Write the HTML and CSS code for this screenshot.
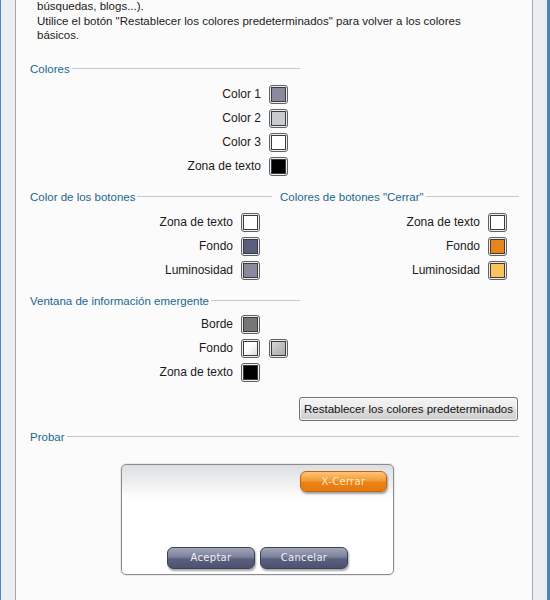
FILE: index.html
```html
<!DOCTYPE html>
<html>

<head>
    <meta charset="utf-8">
    <meta name="viewport" content="width=device-width">
    <title>Opciones de color</title>
    <link rel="stylesheet" href="styles.css">
</head>

<body>
    <div class="frame">
        <div class="content">
            <p class="intro">
                búsquedas, blogs...).<br>
                Utilice el botón "Restablecer los colores predeterminados" para volver a los colores
                básicos.
            </p>

            <div class="group narrow g-colores">
                <div class="legend"><span>Colores</span></div>
                <div class="rows">
                    <div class="row">Color 1 <span class="sw"><i class="c-gris"></i></span></div>
                    <div class="row">Color 2 <span class="sw"><i class="c-claro"></i></span></div>
                    <div class="row">Color 3 <span class="sw"><i class="c-blanco"></i></span></div>
                    <div class="row">Zona de texto <span class="sw"><i class="c-negro"></i></span></div>
                </div>
            </div>

            <div class="pair">
                <div class="group">
                    <div class="legend"><span>Color de los botones</span></div>
                    <div class="rows">
                        <div class="row">Zona de texto <span class="sw"><i class="c-blanco"></i></span></div>
                        <div class="row">Fondo <span class="sw"><i class="c-pizarra"></i></span></div>
                        <div class="row">Luminosidad <span class="sw"><i class="c-gris"></i></span></div>
                    </div>
                </div>
                <div class="group">
                    <div class="legend"><span>Colores de botones "Cerrar"</span></div>
                    <div class="rows">
                        <div class="row">Zona de texto <span class="sw"><i class="c-blanco"></i></span></div>
                        <div class="row">Fondo <span class="sw"><i class="c-naranja"></i></span></div>
                        <div class="row">Luminosidad <span class="sw"><i class="c-ambar"></i></span></div>
                    </div>
                </div>
            </div>

            <div class="group narrow g-ventana">
                <div class="legend"><span>Ventana de información emergente</span></div>
                <div class="rows">
                    <div class="row">Borde <span class="sw"><i class="c-borde"></i></span><span class="sw-empty"></span></div>
                    <div class="row">Fondo <span class="sw"><i class="c-fondo1"></i></span><span class="sw"><i class="c-fondo2"></i></span></div>
                    <div class="row">Zona de texto <span class="sw"><i class="c-negro"></i></span><span class="sw-empty"></span></div>
                </div>
            </div>

            <div class="actions">
                <button class="btn-reset">Restablecer los colores predeterminados</button>
            </div>

            <div class="group g-probar">
                <div class="legend"><span>Probar</span></div>
                <div class="preview">
                    <div class="preview-top">
                        <button class="pbtn pbtn-close">X-Cerrar</button>
                    </div>
                    <div class="preview-bottom">
                        <button class="pbtn">Aceptar</button>
                        <button class="pbtn">Cancelar</button>
                    </div>
                </div>
            </div>
        </div>
    </div>
</body>

</html>
```

FILE: styles.css
```css
* {
    margin: 0;
    padding: 0;
    box-sizing: border-box;
}

body {
    font-family: "Liberation Sans", Arial, sans-serif;
    font-size: 12px;
    color: #1a1a1a;
    background: #eceef1;
}

.frame {
    height: 600px;
    border-left: 1px solid #4a86c0;
    border-right: 3px solid #4a86c0;
    padding: 0 14px;
    background: #eceef1;
}

.content {
    height: 600px;
    overflow: hidden;
    background: #fbfbfc;
    border-left: 1px solid #a6a8ac;
    border-right: 1px solid #a6a8ac;
    padding: 0 13px 0 14px;
}

.intro {
    width: 425px;
    margin: -1px 0 0 7px;
    font-size: 11.5px;
    line-height: 14.5px;
}

/* group header: caption followed by a thin rule */
.legend {
    display: flex;
    align-items: center;
    height: 14px;
    font-size: 11.5px;
    color: #22678c;
}

.legend::after {
    content: "";
    flex: 1;
    height: 1px;
    margin-left: 2px;
    background: #c6c9cd;
}

.group {
    margin-top: 14px;
}

.narrow {
    width: 270px;
}

.g-colores {
    margin-top: 19px;
}

.rows {
    display: flex;
    flex-direction: column;
    gap: 5px;
    padding: 9px 12px 0 0;
}

.g-ventana .rows {
    padding-top: 7px;
}

.row {
    display: flex;
    justify-content: flex-end;
    align-items: center;
    height: 19px;
    gap: 8px;
}

.g-ventana .row .sw-empty,
.g-ventana .row .sw + .sw {
    margin-left: 1px;
}

.pair {
    display: grid;
    grid-template-columns: 242px 1fr;
    gap: 8px;
}

.pair .group {
    margin-top: 14px;
}

/* colour swatch */
.sw,
.sw-empty {
    width: 19px;
    height: 19px;
    flex: none;
}

.sw {
    border: 1px solid #5f6063;
    border-radius: 3px;
    padding: 1px;
    background: #eeeeee;
}

.sw i {
    display: block;
    width: 100%;
    height: 100%;
    border: 1px solid #3c3c3c;
}

.c-gris { background: #898b9c; }
.c-claro { background: #c9cacd; }
.c-blanco { background: #ffffff; }
.c-negro { background: #000000; }
.c-pizarra { background: #5a5d7c; }
.c-naranja { background: #e8841c; }
.c-ambar { background: #fbc35c; }
.c-borde { background: #767676; }
.c-fondo1 { background: linear-gradient(135deg, #ffffff 40%, #dcdcdc); }
.c-fondo2 { background: linear-gradient(135deg, #d6d6d6, #a9a9a9); }

.actions {
    display: flex;
    justify-content: flex-end;
    margin-top: 15px;
    padding-right: 1px;
}

.btn-reset {
    font: inherit;
    font-size: 11.5px;
    color: #111;
    width: 219px;
    height: 24px;
    border: 1px solid #707070;
    border-radius: 3px;
    background: linear-gradient(#f3f3f3 0%, #ebebeb 50%, #dddddd 51%, #cfcfcf 100%);
    box-shadow: inset 0 0 0 1px rgba(255, 255, 255, 0.7);
}

.g-probar {
    margin-top: 9px;
}

/* sample dialog */
.preview {
    width: 273px;
    height: 111px;
    margin: 20px 0 0 91px;
    padding: 6px 6px 5px;
    display: flex;
    flex-direction: column;
    justify-content: space-between;
    border: 1px solid #8c8c8c;
    border-radius: 5px;
    background: linear-gradient(#dcdee2, #ffffff 34px);
    box-shadow: 0 0 0 1px #e9eaec;
}

.preview-top {
    display: flex;
    justify-content: flex-end;
}

.preview-bottom {
    display: flex;
    justify-content: center;
    gap: 5px;
}

.pbtn {
    font-family: "DejaVu Sans", sans-serif;
    font-size: 10px;
    letter-spacing: 0.3px;
    color: #eef0f6;
    width: 88px;
    height: 22px;
    border: 1px solid #3e4259;
    border-radius: 6px;
    background: linear-gradient(#a3a7ba 0%, #7b7f99 45%, #5c6080 55%, #4d516e 100%);
    box-shadow: 1px 2px 2px rgba(0, 0, 0, 0.35);
}

.pbtn-close {
    width: 87px;
    height: 21px;
    color: #fde7c8;
    border-color: #c2620c;
    background: linear-gradient(#fcc57a 0%, #f59b35 45%, #ec8216 55%, #e57a10 100%);
}
```
